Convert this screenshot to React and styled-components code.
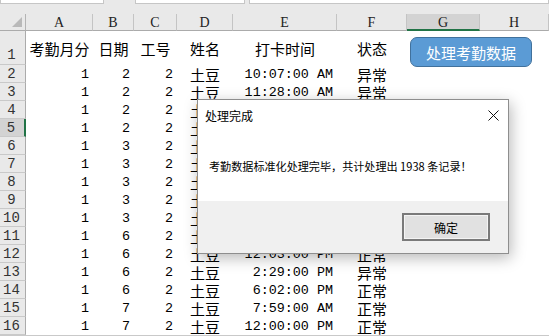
import React from "react";
import styled, { createGlobalStyle } from "styled-components";

const GlobalStyle = createGlobalStyle`
  html, body { margin: 0; padding: 0; background: #fff; overflow: hidden; }
  * { box-sizing: border-box; }
`;

const Page = styled.div`
  position: relative;
  width: 549px;
  height: 336px;
  overflow: hidden;
  background: #fff;
`;

const TopBar = styled.div`
  height: 14px;
  background: #e9e9e9;
  display: flex;
  align-items: flex-start;
`;

const InputBox = styled.div`
  height: 4px;
  width: ${(p) => p.$w}px;
  margin-left: ${(p) => p.$ml || 0}px;
  background: #fff;
  border: 1px solid #c6c6c6;
  border-top: none;
`;

const Sheet = styled.div`
  display: grid;
  grid-template-columns: 26px 67px 41px 43px 56px 104px 70px 73px 69px;
  grid-template-rows: 17px 34px repeat(15, 18px);
  border-bottom: 1px solid #c9c9c9;
`;

const Corner = styled.div`
  position: relative;
  background: #e9e9e9;
  border-right: 1px solid #b4b4b4;
  border-bottom: 1px solid #ababab;
  &::after {
    content: "";
    position: absolute;
    right: 3px;
    bottom: 3px;
    width: 0;
    height: 0;
    border-left: 10px solid transparent;
    border-bottom: 10px solid #b9b9b9;
  }
`;

const ColHead = styled.div`
  background: ${(p) => (p.$selected ? "#d3d3d3" : "#e9e9e9")};
  border-right: 1px solid #c4c4c4;
  border-bottom: ${(p) => (p.$selected ? "2px solid #217346" : "1px solid #ababab")};
  display: flex;
  align-items: center;
  justify-content: center;
  font-family: "Liberation Serif", serif;
  font-size: 14px;
  color: #222;
  padding-top: 2px;
`;

const RowHead = styled.div`
  background: ${(p) => (p.$selected ? "#d3d3d3" : "#e9e9e9")};
  border-right: ${(p) => (p.$selected ? "2px solid #217346" : "1px solid #ababab")};
  border-bottom: 1px solid #c9c9c9;
  display: flex;
  align-items: ${(p) => (p.$tall ? "flex-end" : "center")};
  justify-content: center;
  padding-bottom: ${(p) => (p.$tall ? "1px" : "0")};
  padding-right: 2px;
  font-family: "Liberation Mono", monospace;
  font-size: 14px;
  color: #333;
`;

const Cell = styled.div`
  display: flex;
  align-items: center;
  justify-content: ${(p) => (p.$align === "right" ? "flex-end" : "center")};
  padding-right: ${(p) => (p.$align === "right" ? "4px" : "0")};
  font-family: ${(p) =>
    p.$cjk
      ? `"Noto Sans CJK SC", sans-serif`
      : `"Liberation Mono", "Noto Sans CJK SC", monospace`};
  font-size: ${(p) => (p.$cjk ? "15px" : "13.4px")};
  color: #000;
  white-space: nowrap;
  overflow: hidden;
`;

const ShapeButton = styled.div`
  position: absolute;
  left: 410px;
  top: 37px;
  width: 122px;
  height: 30px;
  background: #5b9bd5;
  border: 1px solid #41719c;
  border-radius: 7px;
  color: #fff;
  font-family: "Noto Sans CJK SC", sans-serif;
  font-size: 15px;
  display: flex;
  align-items: center;
  justify-content: center;
`;

const Dialog = styled.div`
  position: absolute;
  left: 197px;
  top: 99px;
  width: 312px;
  height: 155px;
  background: #fff;
  border: 1px solid #8e8e8e;
  box-shadow: 2px 4px 14px rgba(0, 0, 0, 0.28);
  display: flex;
  flex-direction: column;
  font-family: "Noto Sans CJK SC", sans-serif;
  color: #000;
`;

const TitleBar = styled.div`
  height: 31px;
  display: flex;
  align-items: center;
  justify-content: space-between;
  padding: 0 9px 0 7px;
  font-size: 12px;
`;

const Body = styled.div`
  flex: 1;
  display: flex;
  align-items: center;
  padding: 0 0 0 11px;
  font-size: 11.1px;
`;

const Footer = styled.div`
  height: 52px;
  background: #f0f0f0;
  display: flex;
  align-items: center;
  justify-content: flex-end;
  padding-right: 18px;
`;

const OkButton = styled.div`
  width: 88px;
  height: 28px;
  background: #e1e1e1;
  border: 2px solid #7a7a7a;
  box-shadow: inset 0 0 0 1px #f4f4f4;
  display: flex;
  align-items: center;
  justify-content: center;
  font-size: 12px;
`;

const CloseIcon = () => (
  <svg width="11" height="11" viewBox="0 0 11 11">
    <path d="M0.5 0.5 L10.5 10.5 M10.5 0.5 L0.5 10.5" stroke="#111" strokeWidth="1" fill="none" />
  </svg>
);

const cols = ["A", "B", "C", "D", "E", "F", "G", "H"];
const headers = ["考勤月分", "日期", "工号", "姓名", "打卡时间", "状态", "", ""];

/* rows 4–11: time/status lie fully beneath the dialog, so they are left blank */
const rows = [
  [1, 2, 2, "土豆", "10:07:00 AM", "异常"],
  [1, 2, 2, "土豆", "11:28:00 AM", "异常"],
  [1, 2, 2, "土豆", "", ""],
  [1, 2, 2, "土豆", "", ""],
  [1, 3, 2, "土豆", "", ""],
  [1, 3, 2, "土豆", "", ""],
  [1, 3, 2, "土豆", "", ""],
  [1, 3, 2, "土豆", "", ""],
  [1, 3, 2, "土豆", "", ""],
  [1, 6, 2, "土豆", "", ""],
  [1, 6, 2, "土豆", "12:03:00 PM", "正常"],
  [1, 6, 2, "土豆", "2:29:00 PM", "异常"],
  [1, 6, 2, "土豆", "6:02:00 PM", "正常"],
  [1, 7, 2, "土豆", "7:59:00 AM", "正常"],
  [1, 7, 2, "土豆", "12:00:00 PM", "正常"],
];

export default function App() {
  return (
    <Page>
      <GlobalStyle />
      <TopBar>
        <InputBox $w={104} />
        <InputBox $w={110} $ml={31} />
        <InputBox $w={300} $ml={4} />
      </TopBar>
      <Sheet>
        <Corner />
        {cols.map((c) => (
          <ColHead key={c} $selected={c === "G"}>
            {c}
          </ColHead>
        ))}
        <RowHead $tall>1</RowHead>
        {headers.map((h, i) => (
          <Cell key={i} $cjk>
            {h}
          </Cell>
        ))}
        {rows.map((r, i) => (
          <React.Fragment key={i}>
            <RowHead $selected={i + 2 === 5}>{i + 2}</RowHead>
            <Cell $align="right">{r[0]}</Cell>
            <Cell $align="right">{r[1]}</Cell>
            <Cell $align="right">{r[2]}</Cell>
            <Cell $cjk>{r[3]}</Cell>
            <Cell $align="right">{r[4]}</Cell>
            <Cell $cjk>{r[5]}</Cell>
            <Cell />
            <Cell />
          </React.Fragment>
        ))}
      </Sheet>
      <ShapeButton>处理考勤数据</ShapeButton>
      <Dialog>
        <TitleBar>
          <span>处理完成</span>
          <CloseIcon />
        </TitleBar>
        <Body>考勤数据标准化处理完毕，共计处理出 1938 条记录！</Body>
        <Footer>
          <OkButton>确定</OkButton>
        </Footer>
      </Dialog>
    </Page>
  );
}
